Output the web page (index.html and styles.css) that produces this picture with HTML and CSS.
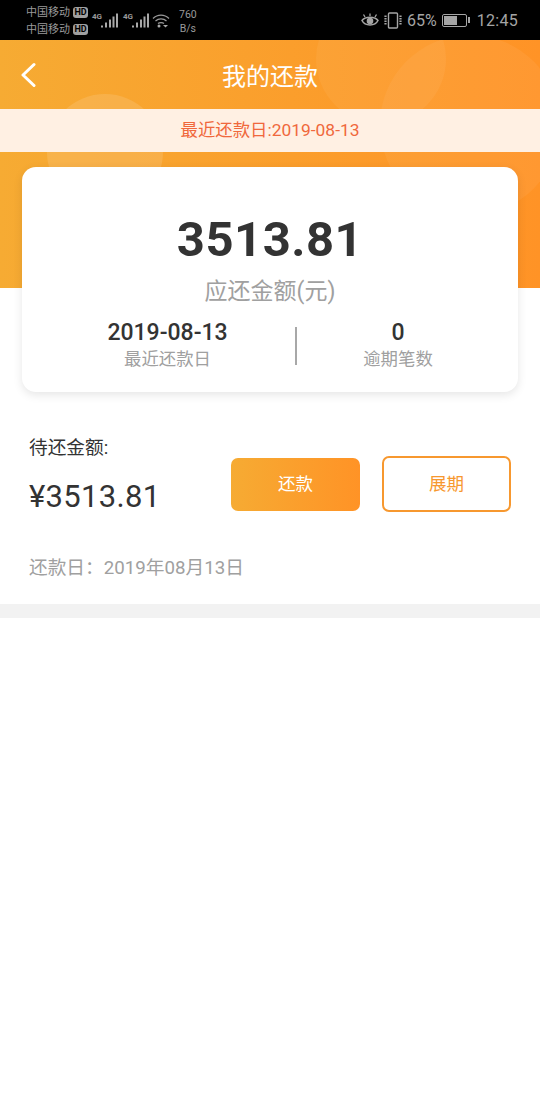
FILE: index.html
```html
<!DOCTYPE html>
<html lang="zh">
<head>
<meta charset="utf-8">
<title>我的还款</title>
<link rel="stylesheet" href="styles.css">
</head>
<body>
<div class="status">
  <div class="carriers">
    <div class="carrier">中国移动<span class="hd">HD</span></div>
    <div class="carrier">中国移动<span class="hd">HD</span></div>
  </div>
  <div class="signal">
    <span class="g4">4G</span>
    <svg width="18" height="16" viewBox="0 0 18 16"><path d="M2 14.500v-2M6 14.500v-5M10 14.500v-8M13.500 14.500v-11M17 14.500v-14" stroke="#a8a8a8" stroke-width="2" fill="none"/></svg>
  </div>
  <div class="signal">
    <span class="g4">4G</span>
    <svg width="18" height="16" viewBox="0 0 18 16"><path d="M2 14.500v-2M6 14.500v-5M10 14.500v-8M13.500 14.500v-11M17 14.500v-14" stroke="#a8a8a8" stroke-width="2" fill="none"/></svg>
  </div>
  <svg class="wifi" width="18" height="15" viewBox="0 0 18 15"><path d="M1 5.500C5.500 1 12.500 1 17 5.500M3.500 8C6.500 5.200 11.500 5.200 14.500 8M6 10.500C7.500 9.200 10.500 9.200 12 10.500" stroke="#9a9a9a" stroke-width="1.200" fill="none"/><circle cx="7" cy="13" r="1.500" fill="#a8a8a8"/><path d="M11 12h5l-2.500 2.500z" fill="#a8a8a8"/></svg>
  <div class="speed"><div>760</div><div>B/s</div></div>
  <div class="status-right">
    <svg width="18" height="16" viewBox="0 0 18 16"><path d="M1 8.500C4 4 14 4 17 8.500C14 14.500 4 14.500 1 8.500z" stroke="#a5a5a5" stroke-width="1.500" fill="none"/><circle cx="9" cy="9" r="3.300" fill="#a5a5a5"/><path d="M4 5L2.500 2.500M9 4V1.500M14 5l1.500-2.500" stroke="#a5a5a5" stroke-width="1.300"/></svg>
    <svg class="vib" width="18" height="17" viewBox="0 0 18 17"><rect x="4.500" y="1" width="9" height="15" rx="1" stroke="#a5a5a5" stroke-width="1.400" fill="none"/><path d="M1.500 3.500v10M16.500 3.500v10" stroke="#a5a5a5" stroke-width="2.200" stroke-dasharray="1.500 1"/></svg>
    <span class="pct">65%</span>
    <span class="battery"><span class="battery-fill"></span></span><span class="battery-tip"></span>
    <span class="clock">12:45</span>
  </div>
</div>
<section class="hero">
  <div class="hero-bg">
    <span class="circle c1"></span>
    <span class="circle c2"></span>
    <span class="circle c3"></span>
  </div>
  <div class="nav">
    <svg class="back" width="16" height="26" viewBox="0 0 16 26"><path d="M14 2.500L3 13l11 10.500" stroke="#fff" stroke-width="3" stroke-linecap="round" stroke-linejoin="round" fill="none"/></svg>
    <h1>我的还款</h1>
  </div>
  <div class="notice">最近还款日:2019-08-13</div>
  <div class="card">
    <div class="total">3513.81</div>
    <div class="total-label">应还金额(元)</div>
    <div class="stats">
      <div class="stat">
        <div class="stat-value">2019-08-13</div>
        <div class="stat-label">最近还款日</div>
      </div>
      <div class="divider"></div>
      <div class="stat">
        <div class="stat-value">0</div>
        <div class="stat-label">逾期笔数</div>
      </div>
    </div>
  </div>
</section>
<section class="bill">
  <div class="bill-top">
    <div class="due">
      <div class="due-label">待还金额:</div>
      <div class="due-amount">¥3513.81</div>
    </div>
    <div class="actions">
      <button class="btn btn-pay">还款</button>
      <button class="btn btn-extend">展期</button>
    </div>
  </div>
  <div class="due-date">还款日：2019年08月13日</div>
</section>
<div class="band"></div>
</body>
</html>
```
FILE: styles.css
```css
* { box-sizing: border-box; }
html, body { margin: 0; padding: 0; }
body {
  width: 540px;
  height: 1120px;
  background: #fff;
  font-family: Roboto, "Noto Sans CJK SC", sans-serif;
  overflow: hidden;
}
.status {
  height: 40px;
  background: #000;
  display: flex;
  align-items: center;
  padding: 0 22px 0 26px;
  color: #9a9a9a;
}
.carriers { width: 64px; font-size: 11px; line-height: 17px; margin-top: 1px; }
.carrier { display: flex; align-items: center; white-space: nowrap; }
.hd {
  margin-left: 3px;
  background: #a0a0a0;
  color: #000;
  border-radius: 3px;
  font-size: 9px;
  font-weight: 700;
  line-height: 11px;
  height: 11px;
  padding: 0 1.500px;
}
.signal { display: flex; align-items: flex-start; margin-left: 2px; width: 30px; }
.signal + .signal { margin-left: 1px; }
.signal svg { margin-left: -1px; margin-top: 1px; }
.g4 { font-size: 8px; font-weight: 700; line-height: 10px; margin-right: -1px; }
.wifi { margin-left: -1px; }
.speed { margin-left: 9px; margin-top: 4px; font-size: 10.500px; line-height: 14px; text-align: center; }
.status-right { margin-left: auto; display: flex; align-items: center; color: #a5a5a5; }
.vib { margin-left: 5px; }
.pct { font-size: 16px; margin-left: 5px; }
.battery {
  margin-left: 5px;
  width: 25px;
  height: 13px;
  border: 1px solid #a5a5a5;
  border-radius: 2px;
  padding: 1px;
  display: block;
}
.battery-fill { display: block; width: 65%; height: 100%; background: #a5a5a5; }
.battery-tip { width: 2px; height: 6px; background: #a5a5a5; margin-left: 1px; }
.clock { font-size: 16px; margin-left: 7px; letter-spacing: 0.300px; }
.hero {
  position: relative;
  height: 248px;
  background: linear-gradient(90deg, #f6ab33, #ff9326);
}
.hero-bg { position: absolute; inset: 0; overflow: hidden; }
.circle { position: absolute; border-radius: 50%; background: rgba(255,255,255,0.05); }
.c1 { left: 47px; top: 54px; width: 116px; height: 116px; background: rgba(255,255,255,0.12); }
.c2 { left: 316px; top: -46px; width: 130px; height: 130px; }
.c3 { left: 380px; top: -5px; width: 180px; height: 180px; }
.nav { position: relative; height: 69px; display: flex; align-items: center; justify-content: center; }
.back { position: absolute; left: 20px; top: 22px; }
h1 { margin: 0; font-size: 24px; font-weight: 400; color: #fff; }
.notice {
  position: relative;
  height: 43px;
  background: #fff0e3;
  color: #f0683c;
  font-size: 17.400px;
  line-height: 43px;
  text-align: center;
}
.card {
  position: absolute;
  left: 22px;
  top: 127px;
  width: 496px;
  height: 225px;
  background: #fff;
  border-radius: 14px;
  box-shadow: 0 3px 10px rgba(0,0,0,0.1);
  text-align: center;
}
.total { margin-top: 43px; font-size: 49px; font-weight: 700; line-height: 60px; color: #333; letter-spacing: 0.500px; }
.total-label { font-size: 23px; line-height: 30px; color: #a0a0a0; margin-top: 7px; }
.stats {
  display: grid;
  grid-template-columns: 255px 2px 1fr;
  align-items: center;
  margin-top: 13px;
  padding: 0 19px 0 18px;
}
.stat-value { font-size: 23px; font-weight: 500; line-height: 26px; color: #333; }
.stat-label { font-size: 17.400px; line-height: 26px; color: #a0a0a0; }
.divider { height: 38px; background: #a8a8a8; }
.bill { height: 316px; padding: 0 29px; }
.bill-top { display: flex; justify-content: space-between; }
.due-label { margin-top: 148px; font-size: 18.700px; line-height: 24px; color: #333; }
.due-amount { margin-top: 18px; font-size: 31px; line-height: 38px; color: #333; letter-spacing: 0.300px; }
.actions { display: flex; gap: 22px; margin-top: 164px; align-items: center; }
.btn {
  width: 129px;
  height: 56px;
  border-radius: 7px;
  font-family: inherit;
  font-size: 17.500px;
  padding: 0 0 4px;
}
.btn-pay { border: 0; height: 53px; color: #fff; background: linear-gradient(90deg, #f6ab33, #ff9326); }
.btn-extend { border: 2px solid #f7982f; background: #fff; color: #f7982f; }
.due-date { font-size: 18.700px; line-height: 24px; color: #a0a0a0; margin-top: 40px; }
.band { height: 14px; background: #f2f2f2; }
```
